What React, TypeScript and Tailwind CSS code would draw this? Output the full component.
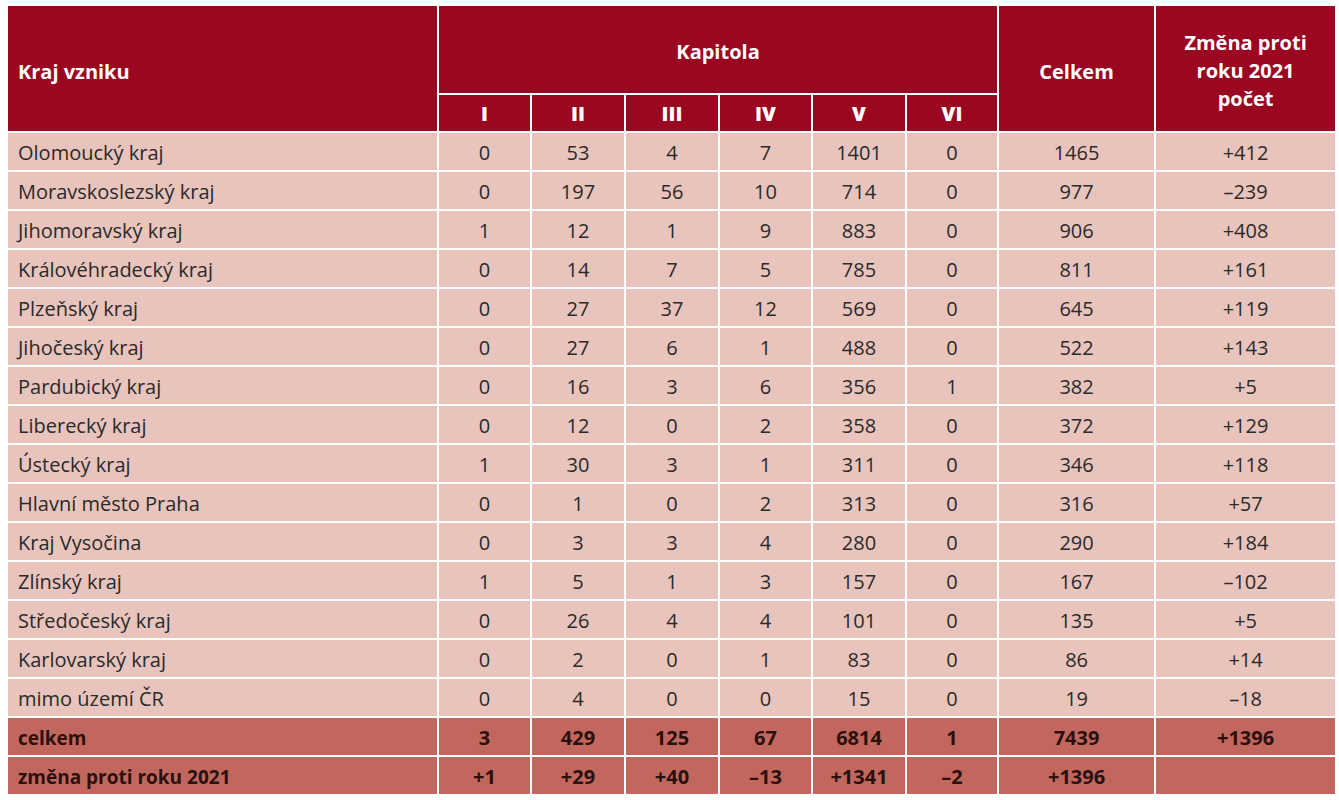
import React from "react";

const rows: [string, string[], string, string][] = [
  ["Olomoucký kraj", ["0", "53", "4", "7", "1401", "0"], "1465", "+412"],
  ["Moravskoslezský kraj", ["0", "197", "56", "10", "714", "0"], "977", "–239"],
  ["Jihomoravský kraj", ["1", "12", "1", "9", "883", "0"], "906", "+408"],
  ["Královéhradecký kraj", ["0", "14", "7", "5", "785", "0"], "811", "+161"],
  ["Plzeňský kraj", ["0", "27", "37", "12", "569", "0"], "645", "+119"],
  ["Jihočeský kraj", ["0", "27", "6", "1", "488", "0"], "522", "+143"],
  ["Pardubický kraj", ["0", "16", "3", "6", "356", "1"], "382", "+5"],
  ["Liberecký kraj", ["0", "12", "0", "2", "358", "0"], "372", "+129"],
  ["Ústecký kraj", ["1", "30", "3", "1", "311", "0"], "346", "+118"],
  ["Hlavní město Praha", ["0", "1", "0", "2", "313", "0"], "316", "+57"],
  ["Kraj Vysočina", ["0", "3", "3", "4", "280", "0"], "290", "+184"],
  ["Zlínský kraj", ["1", "5", "1", "3", "157", "0"], "167", "–102"],
  ["Středočeský kraj", ["0", "26", "4", "4", "101", "0"], "135", "+5"],
  ["Karlovarský kraj", ["0", "2", "0", "1", "83", "0"], "86", "+14"],
  ["mimo území ČR", ["0", "4", "0", "0", "15", "0"], "19", "–18"],
];

const totals: [string, string[], string, string][] = [
  ["celkem", ["3", "429", "125", "67", "6814", "1"], "7439", "+1396"],
  ["změna proti roku 2021", ["+1", "+29", "+40", "–13", "+1341", "–2"], "+1396", ""],
];

export default function App() {
  return (
    <div
      className="w-[1339px] h-[800px] bg-white pt-[4px] pl-[6px]"
      style={{ fontFamily: '"Open Sans", "Noto Sans", sans-serif' }}
    >
      <table className="table-fixed border-collapse w-[1329px] text-[20px]">
        <colgroup>
          <col className="w-[431px]" />
          <col className="w-[93px]" />
          <col className="w-[94px]" />
          <col className="w-[94px]" />
          <col className="w-[93px]" />
          <col className="w-[94px]" />
          <col className="w-[92px]" />
          <col className="w-[157px]" />
          <col className="w-[181px]" />
        </colgroup>
        <thead>
          <tr className="h-[89px] bg-[#9b0621] text-white font-bold">
            <th rowSpan={2} className="border-2 border-white text-left pl-[10px] pt-[6px] font-bold text-[20px]">
              Kraj vzniku
            </th>
            <th colSpan={6} className="border-2 border-white text-center font-bold text-[20px] pt-[4px]">
              Kapitola
            </th>
            <th rowSpan={2} className="border-2 border-white text-center font-bold text-[20px] pt-[6px]">
              Celkem
            </th>
            <th rowSpan={2} className="border-2 border-white text-center font-bold text-[20px] leading-[28px] pt-[4px]">
              Změna proti
              <br />
              roku 2021
              <br />
              počet
            </th>
          </tr>
          <tr className="h-[38px] bg-[#9b0621] text-white">
            {["I", "II", "III", "IV", "V", "VI"].map((r) => (
              <th key={r} className="border-2 border-white text-center font-extrabold text-[20px] pt-[2px]">
                {r}
              </th>
            ))}
          </tr>
        </thead>
        <tbody>
          {rows.map(([name, vals, tot, ch]) => (
            <tr key={name} className="h-[39px] bg-[#e8c4bc] text-[#2a2a2a]">
              <td className="border-2 border-white pl-[10px] pt-[3px]">{name}</td>
              {vals.map((v, i) => (
                <td key={i} className="border-2 border-white text-center pt-[3px]">
                  {v}
                </td>
              ))}
              <td className="border-2 border-white text-center pt-[3px]">{tot}</td>
              <td className="border-2 border-white text-center pt-[3px]">{ch}</td>
            </tr>
          ))}
          {totals.map(([name, vals, tot, ch]) => (
            <tr key={name} className="h-[39px] bg-[#c2675d] text-[#2b1010] font-bold">
              <td className="border-2 border-white pl-[10px] text-[19px] pt-[3px]">{name}</td>
              {vals.map((v, i) => (
                <td key={i} className="border-2 border-white text-center pt-[3px]">
                  {v}
                </td>
              ))}
              <td className="border-2 border-white text-center pt-[3px]">{tot}</td>
              <td className="border-2 border-white text-center pt-[3px]">{ch}</td>
            </tr>
          ))}
        </tbody>
      </table>
    </div>
  );
}
